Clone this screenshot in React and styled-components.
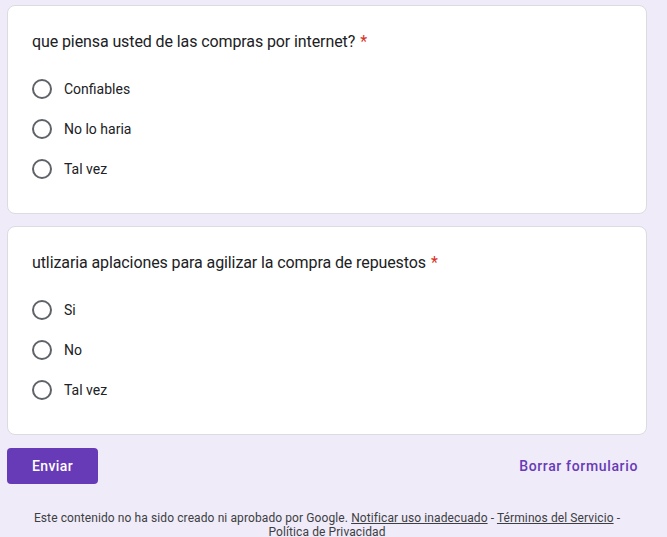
import React from "react";
import styled, { createGlobalStyle } from "styled-components";

const Global = createGlobalStyle`
  html, body { margin: 0; padding: 0; background: #f0ebf8; }
  body { font-family: Roboto, "Noto Sans", Arial, sans-serif; color: #202124; }
`;

const Page = styled.div`
  width: 640px;
  padding: 5px 0 0 7px;
  display: flex;
  flex-direction: column;
`;

const Card = styled.section`
  background: #fff;
  border: 1px solid #dadce0;
  border-radius: 8px;
  padding: 24px;
  margin-bottom: 12px;
  display: flex;
  flex-direction: column;
`;

const Title = styled.div`
  font-size: 16px;
  line-height: 24px;
  letter-spacing: -0.1px;
  color: #202124;
  margin-bottom: 15px;
`;

const Star = styled.span`
  color: #d93025;
  margin-left: 5px;
`;

const Option = styled.label`
  display: flex;
  align-items: center;
  height: 40px;
  font-size: 14px;
  letter-spacing: 0;
  color: #202124;
`;

const Radio = styled.span`
  box-sizing: border-box;
  width: 20px;
  height: 20px;
  border: 2px solid #5f6368;
  border-radius: 50%;
  margin-right: 12px;
  flex: none;
`;

const Actions = styled.div`
  display: flex;
  justify-content: space-between;
  align-items: center;
  margin-top: 1px;
`;

const Submit = styled.button`
  background: #673ab7;
  color: #fff;
  border: none;
  border-radius: 4px;
  height: 36px;
  width: 91px;
  font-family: Roboto, Arial, sans-serif;
  font-weight: 500;
  font-size: 14px;
  letter-spacing: 0.4px;
  padding: 0;
`;

const Clear = styled.button`
  background: none;
  border: none;
  color: #673ab7;
  font-family: Roboto, Arial, sans-serif;
  font-weight: 500;
  font-size: 14px;
  letter-spacing: 0.65px;
  padding: 0 9px 0 8px;
  height: 36px;
`;

const Footer = styled.div`
  margin-top: 27px;
  padding: 0 20px;
  text-align: center;
  font-size: 12px;
  line-height: 14px;
  letter-spacing: 0.1px;
  color: #3c4043;
`;

const Link = styled.a`
  color: #3c4043;
  text-decoration: underline;
`;

const questions = [
  {
    title: "que piensa usted de las compras por internet?",
    options: ["Confiables", "No lo haria", "Tal vez"],
  },
  {
    title: "utlizaria aplaciones para agilizar la compra de repuestos",
    options: ["Si", "No", "Tal vez"],
  },
];

export default function App() {
  return (
    <>
      <Global />
      <Page>
        {questions.map((q) => (
          <Card key={q.title}>
            <Title>
              {q.title}
              <Star>*</Star>
            </Title>
            {q.options.map((o) => (
              <Option key={o}>
                <Radio />
                {o}
              </Option>
            ))}
          </Card>
        ))}
        <Actions>
          <Submit>Enviar</Submit>
          <Clear>Borrar formulario</Clear>
        </Actions>
        <Footer>
          Este contenido no ha sido creado ni aprobado por Google.{" "}
          <Link>Notificar uso inadecuado</Link> - <Link>Términos del Servicio</Link> -{" "}
          <Link>Política de Privacidad</Link>
        </Footer>
      </Page>
    </>
  );
}
